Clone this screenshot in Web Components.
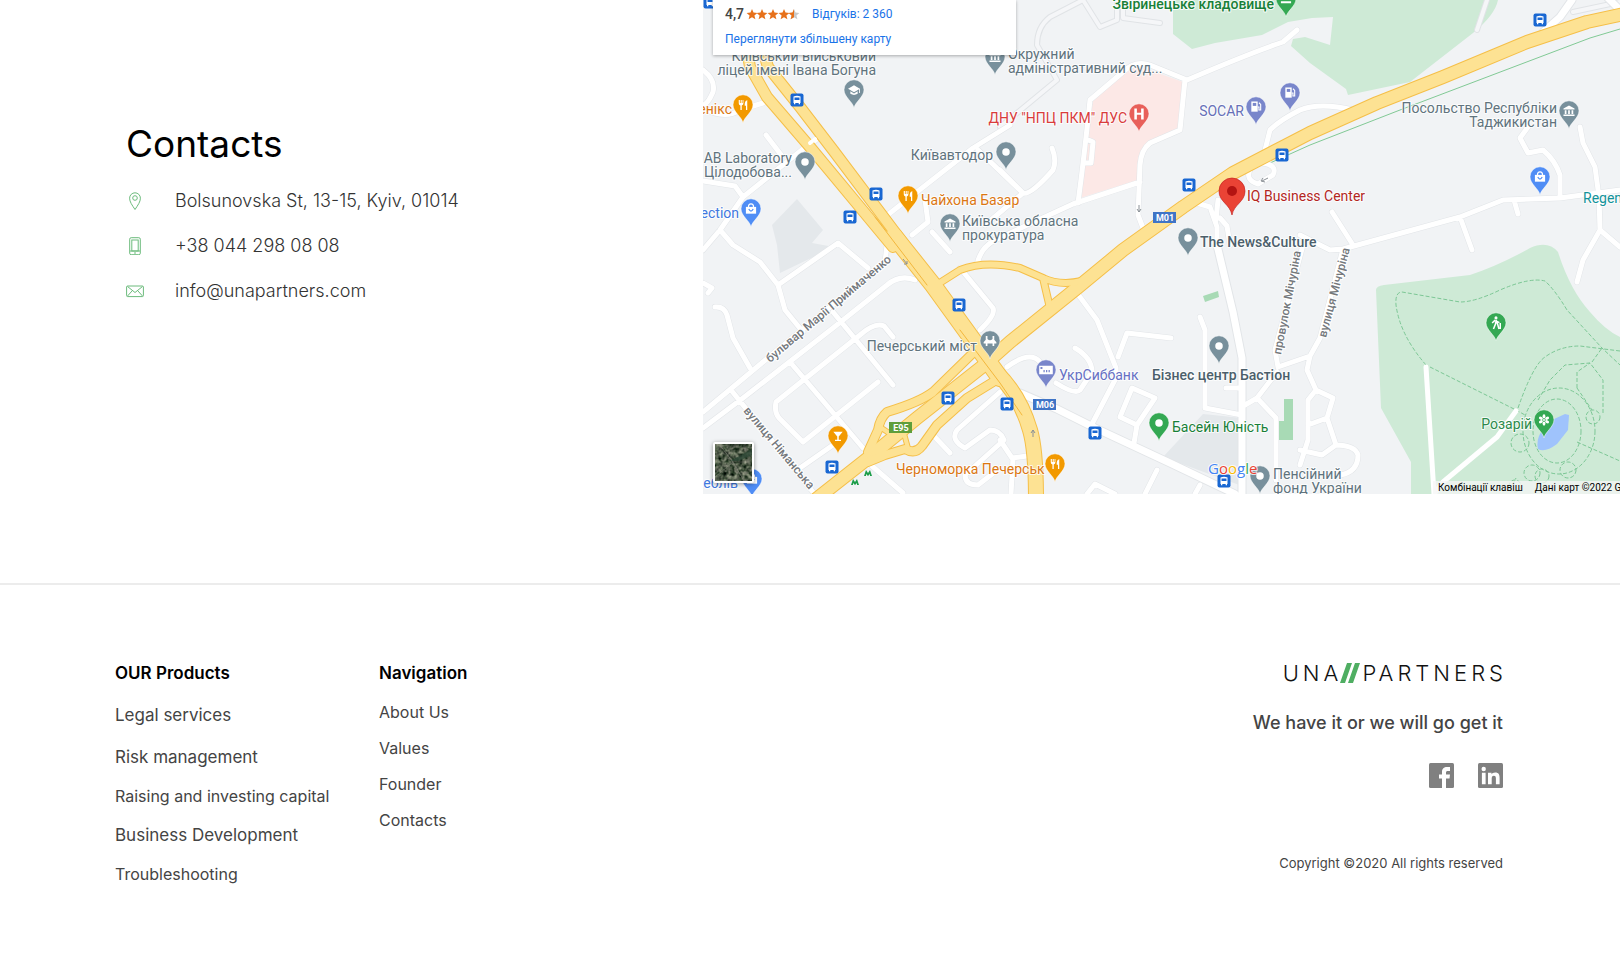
<!DOCTYPE html>
<html lang="en">
<head>
<meta charset="utf-8">
<meta name="viewport" content="width=device-width, initial-scale=1">
<title>Contacts – UNA//PARTNERS</title>
<style>
  body { margin: 0; background: #fff; color: #444; font-family: Inter, "Open Sans", sans-serif; }
</style>
</head>
<body>
<contacts-section>
  <contact-item icon="pin">Bolsunovska St, 13-15, Kyiv, 01014</contact-item>
  <contact-item icon="phone" href="tel:+380442980808">+38 044 298 08 08</contact-item>
  <contact-item icon="mail" href="mailto:info@unapartners.com">info@unapartners.com</contact-item>
  <city-map slot="map"></city-map>
</contacts-section>
<site-footer>
  <footer-column heading="OUR Products" slot="columns">
    <footer-link size="large">Legal services</footer-link>
    <footer-link size="large">Risk management</footer-link>
    <footer-link>Raising and investing capital</footer-link>
    <footer-link size="large">Business Development</footer-link>
    <footer-link>Troubleshooting</footer-link>
  </footer-column>
  <footer-column heading="Navigation" slot="columns">
    <footer-link>About Us</footer-link>
    <footer-link>Values</footer-link>
    <footer-link>Founder</footer-link>
    <footer-link>Contacts</footer-link>
  </footer-column>
  <brand-block slot="brand"></brand-block>
</site-footer>

<script>
class Base extends HTMLElement {
  constructor() {
    super();
    this.attachShadow({ mode: 'open' });
  }
  connectedCallback() { this.shadowRoot.innerHTML = this.render(); }
}

customElements.define('contacts-section', class extends Base {
  render() {
    return `<style>
      :host { display: block; }
      section { display: grid; grid-template-columns: 703fr 917fr; }
      .info { padding: 120px 24px 0 126px; }
      h2 { margin: 0; font-size: 37px; line-height: 48px; font-weight: 400; color: #000; }
      .list { display: grid; row-gap: 21px; margin-top: 21px; }
    </style>
    <section>
      <div class="info"><h2>Contacts</h2><div class="list"><slot></slot></div></div>
      <slot name="map"></slot>
    </section>`;
  }
});

const contactIcons = {
  pin: '<path d="M9 17.500C6 13 3.600 9.800 3.600 6.200a5.400 5.400 0 0 1 10.800 0C14.400 9.800 12 13 9 17.500Z"/><circle cx="9" cy="6" r="2.300"/>',
  phone: '<rect x="3.700" y=".7" width="10.600" height="17" rx="1.500"/><rect x="5.800" y="3" width="6.400" height="11"/><path d="M4 14h10M9 15v2"/>',
  mail: '<rect x=".6" y="4" width="16.800" height="10.600" rx="1"/><path d="M1.500 4.500 9 10.500l7.500-6M1.500 14l4.500-5M16.500 14 12 9"/>'
};
customElements.define('contact-item', class extends Base {
  render() {
    const href = this.getAttribute('href');
    return `<style>
      :host { display: flex; align-items: center; column-gap: 31px; height: 24px; }
      svg { width: 18px; height: 18px; fill: none; stroke: #6cbb7c; stroke-width: 1; flex: none; }
      span, a { font-size: 18px; line-height: 24px; font-weight: 300; color: #333; text-decoration: none; }
    </style>
    <svg viewBox="0 0 18 18" aria-hidden="true">${contactIcons[this.getAttribute('icon')]}</svg>
    ${href ? `<a href="${href}"><slot></slot></a>` : '<span><slot></slot></span>'}`;
  }
});

/* ---------- map data ---------- */
const minorRoads = [
  'M703 70Q716 80 713 92 708 104 703 105', 'M763 103 740 110Q725 120 703 108', 'M766 135 782 156',
  'M817 139 803 149 743 197 720 230 703 250', 'M703 181 735 186 743 197',
  'M720 230 733 245 760 262 778 285 785 310 803 332', 'M778 285 838 243 868 268',
  'M703 412 763 362 885 262 887 245', 'M703 428 743 398 833 328 887 285Q900 274 915 280',
  'M750 368 733 338 727 315Q724 306 715 307', 'M731 390 813 492', 'M833 312 893 385', 'M790 362 863 448',
  'M703 283 712 288 708 293',
  'M893 337 884 326Q875 322 860 335L806 378 776 402Q774 412 779 418L803 442', 'M878 382 803 442', 'M800 468 833 445',
  'M960 268 993 308Q996 315 980 330', 'M977 265Q980 248 995 240L1073 204 1140 182',
  'M872 466 903 493', 'M933 435 950 453',
  'M1000 392 957 430Q950 440 965 448L990 430Q1000 430 1004 440L965 475Q965 485 978 485L1000 468',
  'M1000 440 1012 458 1027 456M1013 458 1011 494',
  'M1007 367Q1030 350 1040 362M1056 383Q1075 395 1080 390L1092 372Q1092 358 1075 348',
  'M1077 293 1097 320 1116 368 1116 378 1092 424', 'M1118 357 1127 333 1171 338',
  'M1132 388 1155 398 1137 425 1120 417ZM1137 425 1134 443', 'M1157 470 1145 494M1087 494 1095 484 1115 494M1195 494 1200 485',
  'M1190 201 1210 207 1217 227 1217 248M1218 200 1216 220M1220 218 1227 226 1230 245',
  'M1200 317 1205 330V408L1242 415', 'M1226 388H1240', 'M1245 405 1257 398 1277 372M1257 398 1276 418V480',
  'M1303 245 1275 350 1278 367 1310 356', 'M1310 356 1320 338 1343 249',
  'M1300 235 1330 250 1343 249 1460 217 1503 200 1560 198 1620 190', 'M1332 212 1353 245', 'M1460 217 1472 250',
  'M1514 200 1518 214', 'M1560 197V175Q1555 160 1543 150L1528 153 1520 138 1528 127',
  'M1580 127 1583 143 1595 167 1599 197 1600 230 1583 260 1577 282M1600 230 1620 247',
  'M1310 356 1307 370 1316 390 1333 398 1327 418 1308 425M1327 418 1336 445 1322 455 1300 450',
  'M1335 445Q1355 445 1358 455 1358 472 1340 475', 'M1316 390 1308 400V440L1300 465',
  'M1297 30 1283 42Q1250 53 1187 80L1150 65Q1135 60 1123 72L1090 100Q1085 150 1078 203',
  'M1185 80 1180 130 1150 143Q1141 150 1140 165L1138 215 1143 228', 'M1086 139 1093 142 1091 163 1083 163',
  'M1265 150 1270 130Q1280 120 1300 110 1320 102 1353 110', 'M1250 170Q1245 180 1258 184L1273 175Q1278 165 1262 163',
  'M1000 170 1023 193Q1030 196 1053 170 1057 160 1052 148', 'M1010 125 973 148 885 217M978 150 1023 193 985 225',
  'M925 200 928 222 912 235M932 232 950 252'
];
const faintRoads = [
  'M1083 0 1050 17Q1037 27 1037 45L1057 80 1000 127', 'M1083 0 1100 27 1117 20V0M1123 0V18L1160 23', 'M1487 0 1477 30',
  'M1573 12 1620 2'
];
const wideRoads = [
  'M1020 393 1057 409 1095 428 1170 463 1235 494', 'M1217 245 1233 312 1242 358V494',
  'M1543 32 1560 17 1572 0', 'M1606 -4 1624 14'
];
const highways = [
  [14, 'M1624 14 1587 22 1527 42 1443 77 1377 103 1310 133 1283 147 1233 173 1183 207 1123 250 1077 288 1010 342 983 366 917 418 867 459 815 500'],
  [12, 'M747 50 750 67 767 97 810 147 893 247'], [12, 'M763 50 768 67 800 107 833 150 906 247'],
  [18, 'M894 236 933 285 967 332 1000 378'], [16, 'M996 372Q1020 395 1030 430 1036 450 1036 500'],
  [10, 'M974 352 933 392Q920 402 887 412 880 418 878 430L868 452'],
  [10, 'M993 382 967 398 937 425 922 446Q915 455 905 449L885 455 868 462'], [6, 'M903 430 908 448'], [6, 'M880 427 895 437'],
  [8, 'M938 284 960 270Q985 260 1020 268L1043 278Q1060 286 1082 281M1043 278 1050 308']
];
const trails = [
  'M1426 365Q1400 335 1396 305 1395 292 1402 292L1460 302Q1475 302 1500 290 1530 277 1545 281 1555 290 1567 310L1602 348 1620 365',
  'M1430 367 1516 410 1525 415', 'M1518 408Q1533 365 1545 357 1560 346 1580 346L1620 351',
  'M1538 400 1550 380 1565 365 1590 363 1603 380V415', 'M1592 362 1602 348M1577 388V372L1590 363M1577 388 1592 410',
  'M1577 442 1620 461', 'M1510 490 1516 478'
];
const GREY = '#78909c', ORANGE = '#f29900', VIOLET = '#7986cb', GREEN = '#34a853', BLUE = '#4f8df5';
const glyphs = {
  dot: '<circle r="4.400" fill="#fff"/>',
  fork: '<path d="M-5-6v4q0 2 2 2.500V6h1.500V.5Q.5 0 .5-2v-4H-.5v3.500h-1V-6h-1.200v3.500h-1V-6Zm8.500 0V6H5V-6Q2-5 2-1.500V1h1.500" fill="#fff"/>',
  bank: '<path d="M0-6.500 6.500-3v1.200h-13V-3ZM-5-1h2v4.500h-2Zm4 0H1v4.500h-2Zm4 0h2v4.500H3ZM-6.500 4.200h13V6h-13Z" fill="#fff"/>',
  cap: '<path d="M-7-1.500 0-5.500l7 4V3.500H6v-4.500L0 2.500Z" fill="#fff"/><path d="M-4.300 1.500V4.500Q0 7 4.300 4.500V1.500L0 4Z" fill="#fff"/>',
  bag: '<path d="M-6-2.500H6V5.500H-6Z" fill="#fff"/><path d="M-3-2.500q0-3.500 3-3.500t3 3.500" fill="none" stroke="#fff" stroke-width="1.400"/><path d="M-2.600 0Q0 4.800 2.600 0" fill="none" stroke="#4f8df5" stroke-width="1.400"/>',
  hosp: '<path d="M-5.500-6.500h3v5h5v-5h3v13h-3v-5.500h-5v5.500h-3Z" fill="#fff"/>',
  pump: '<path d="M-5.500-6.500H2V5.500H-5.500Z" fill="#fff"/><path d="M-3.800-4.800H.3v3.500h-4.100Z" fill="#7986cb"/><path d="M2 0h1.500v3.500h2V-3L3.500-5" fill="none" stroke="#fff" stroke-width="1.300"/>',
  bridge: '<path d="M-5-6h2v3.500Q0 1 3-2.500V-6h2v4.500L7.500 1.500V3H5v3H3V3h-6v3h-2V3h-2.500V1.500L-5-1.500Z" fill="#fff"/>',
  drink: '<path d="M-5.500-5H5.500L.9.5V4.500H3.500V6h-7V4.500H-.9V.5Z" fill="#fff"/>',
  card: '<path d="M-8-5H8V5H-8Z" fill="#fff"/><path d="M-6.500-3.500h2.300v2.300h-2.300ZM-3 0H-1.500v2.500H-3ZM0 0h1.500v2.500H0ZM3 0h1.500v2.500H3Z" fill="#7986cb"/>',
  hiker: '<circle cx="0" cy="-6" r="1.800" fill="#fff"/><path d="m0-3.500 1.800 4.500L3.500 7M-.5-2V1l-2.500 6M0-2.500 4-.5M-1-3.500-4.500 0M5 0v7" fill="none" stroke="#fff" stroke-width="1.800"/>',
  flower: '<g fill="#fff"><circle r="1.200"/>' + [0, 60, 120, 180, 240, 300].map(a => `<ellipse cy="-4.200" rx="1.700" ry="2.500" transform="rotate(${a})"/>`).join('') + '</g>',
  tomb: '<path d="M-2.500-6h5v7h-5ZM-6 2.500H6V5H-6Z" fill="#fff"/>'
};
const pins = [
  [854, 90, GREY, 'cap'], [743, 105, ORANGE, 'fork'], [805, 162, GREY, 'dot'], [751, 209, BLUE, 'bag'], [1006, 152, GREY, 'dot'],
  [908, 196, ORANGE, 'fork'], [950, 224, GREY, 'bank'], [995, 57, GREY, 'bank'], [1139, 114, '#e8605a', 'hosp'],
  [1256, 107, VIOLET, 'pump'], [1290, 93, VIOLET, 'pump'], [1286, -1, GREEN, 'tomb'], [1188, 238, GREY, 'dot'],
  [1569, 111, GREY, 'bank'], [1540, 177, BLUE, 'bag'], [990, 341, GREY, 'bridge'], [838, 436, ORANGE, 'drink'],
  [752, 479, BLUE, 'bag'], [1046, 370, VIOLET, 'card'], [1219, 346, GREY, 'dot'], [1159, 423, GREEN, 'dot'],
  [1055, 464, ORANGE, 'fork'], [1260, 476, GREY, 'dot'], [1496, 323, GREEN, 'hiker'], [1544, 420, GREEN, 'flower']
];
const stops = [[710, 2], [797, 100], [876, 194], [850, 217], [1189, 185], [1282, 155], [1540, 20], [959, 305], [948, 398], [1007, 404], [832, 467], [1095, 433], [1224, 481]];
const T = '#60737d', O = '#db7713', R = '#d93c3c';
/* x, baseline, text, colour, anchor, weight */
const labels = [
  [876, 61, 'Київський військовий', T, 'end'], [876, 75, 'ліцей імені Івана Богуна', T, 'end'],
  [732, 114, 'енікс', O, 'end'], [792, 163, 'AB Laboratory', T, 'end'], [792, 177, 'Цілодобова...', T, 'end'],
  [739, 218, 'ection', '#3f78e0', 'end'], [993, 160, 'Київавтодор', T, 'end'], [921, 205, 'Чайхона Базар', O],
  [962, 226, 'Київська обласна', T], [962, 240, 'прокуратура', T], [1008, 59, 'Окружний', T],
  [1008, 73, 'адміністративний суд...', T], [1127, 123, 'ДНУ "НПЦ ПКМ" ДУС', R, 'end'], [1244, 116, 'SOCAR', '#6670b8', 'end'],
  [1274, 9, 'Звіринецьке кладовище', '#188038', 'end', 500], [1247, 201, 'IQ Business Center', '#b3261e'],
  [1200, 247, 'The News&amp;Culture', '#4c5f6b', 'start', 500], [1557, 113, 'Посольство Республіки', T, 'end'], [1557, 127, 'Таджикистан', T, 'end'],
  [1583, 203, 'Regen', '#12939a'], [977, 351, 'Печерський міст', T, 'end'], [1059, 380, 'УкрСиббанк', '#6670c4'],
  [1152, 380, 'Бізнес центр Бастіон', '#4c5f6b', 'start', 500], [1172, 432, 'Басейн Юність', '#188038'], [896, 474, 'Черноморка Печерськ', O],
  [1273, 479, 'Пенсійний', T], [1273, 493, 'фонд України', T], [1532, 429, 'Розарій', '#2c8a4b', 'end'], [738, 488, 'еблів', '#3f78e0', 'end']
];
const streets = [[770, 363, -40, 'бульвар Марії Приймаченко'], [743, 411, 50, 'вулиця Німанська'], [1281, 355, -79, 'провулок Мічуріна'], [1326, 338, -75, 'вулиця Мічуріна']];
const shields = [[1153, 212, 'M01', '#3f74c6'], [1033, 399, 'M06', '#3f74c6'], [889, 422, 'E95', '#5f9e3a']];

customElements.define('city-map', class extends Base {
  render() {
    const strokes = (list, w, c) => `<path d="${list.join('')}" stroke="${c}" stroke-width="${w}"/>`;
    const star = x => `M${x} 1l1.500 3.600 3.900.3-3 2.500 1 3.800L${x} 9.200l-3.400 2 1-3.800-3-2.500 3.900-.3Z`;
    return `<style>
      :host { display: block; position: relative; overflow: hidden; font-family: Roboto, sans-serif; }
      .map { display: block; width: 100%; height: auto; background: #f1f3f5; }
      .roads { fill: none; stroke-linecap: round; stroke-linejoin: round; }
      .labels { font-size: 14px; paint-order: stroke; stroke: #fff; stroke-width: 2px; stroke-linejoin: round; stroke-opacity: .8; }
      .streets { font-size: 12px; font-weight: 500; fill: #74787c; paint-order: stroke; stroke: #fff; stroke-width: 2px; }
      .shields { font-size: 9px; font-weight: 700; fill: #fff; text-anchor: middle; }
      .card { position: absolute; top: 0; left: 10px; width: 303px; height: 55px; box-sizing: border-box; padding: 5px 12px;
        background: #fff; box-shadow: 0 1px 3px rgba(0,0,0,.3); }
      .rating { display: flex; align-items: center; height: 18px; font-size: 14px; font-weight: 500; color: #444; }
      .rating svg { width: 56px; height: 12px; margin-right: 12px; }
      a { color: #1a73e8; font-size: 12px; line-height: 20px; text-decoration: none; font-weight: 400; }
      .card > a { display: block; margin-top: 6px; }
      .sat { position: absolute; left: 10px; bottom: 11px; width: 41px; height: 41px; box-sizing: border-box; border: 2px solid #fff;
        border-radius: 2px; padding: 0; overflow: hidden; box-shadow: 0 1px 4px rgba(0,0,0,.4); background: #3f4b42; }
      .sat svg { display: block; width: 37px; height: 37px; }
      .legal { position: absolute; bottom: 0; left: calc(100% - 187px); display: flex; column-gap: 12px; padding-left: 5px; height: 13px;
        background: rgba(245,245,245,.75); white-space: nowrap; width: 240px; }
      .legal button, .legal span { border: 0; padding: 0; background: none; font: 400 10px/13px Roboto, sans-serif; color: #000; }
    </style>
    <svg class="map" viewBox="703 0 917 494" role="img" aria-label="Map">
      <path fill="#e4e8eb" d="M797 199 823 230 812 243 834 247 780 273 777 245 772 225ZM1203 414 1242 418V486L1163 457Z"/>
      <path fill="#ceead6" d="M1173 0V34L1192 49 1215 43 1262 35 1288 22 1312 18 1333 17 1330 45 1305 37 1293 39 1291 46 1310 63 1346 89 1348 95 1410 82 1473 33Q1495 15 1498 0ZM1411 494V462L1381 408 1376 290Q1376 286 1384 285L1470 275Q1500 265 1530 248 1548 240 1558 252 1570 290 1590 312 1605 330 1620 337V494Z"/>
      <path fill="#a8dab5" d="M1203 296 1218 291 1219 297 1205 302ZM1284 399h9v41h-14v-19h5Z"/>
      <path fill="#fce8e6" d="M1093 100 1135 65 1183 82 1178 128 1147 142 1138 180 1080 198Z"/>
      <path fill="#9fc3fc" d="M1565 414 1569 415 1568 430 1557 444Q1545 453 1538 449 1536 440 1541 432L1552 420Z"/>
      <g fill="none" stroke="#7cc795" stroke-width="1" stroke-dasharray="4 2">
        <path d="${trails.join('')}"/><ellipse cx="1557" cy="431" rx="24" ry="32"/><ellipse cx="1559" cy="431" rx="36" ry="43"/>
        <circle cx="1520" cy="443" r="9"/><circle cx="1532" cy="473" r="8"/><circle cx="1568" cy="470" r="8"/><circle cx="1593" cy="417" r="7"/><circle cx="1542" cy="476" r="7"/><circle cx="1515" cy="486" r="6"/>
      </g>
      <path fill="none" stroke="#81c995" stroke-width="1" d="M1270 163 1310 145 1400 110 1590 38 1620 29"/>
      <g class="roads">
        ${strokes(faintRoads, 6, '#e0e3e6')}${strokes(faintRoads, 4, '#f5f6f8')}
        ${strokes(minorRoads, 6, '#e2e5e8')}${strokes(wideRoads, 9, '#e2e5e8')}
        ${strokes(minorRoads, 5, '#fff')}${strokes(wideRoads, 7, '#fff')}
        ${strokes(['M1426 367 1434 494M1516 411 1497 437 1443 482 1434 494'], 5, '#fff')}
        ${highways.map(([w, d]) => strokes([d], w, '#f5bf48')).join('')}
        ${highways.map(([w, d]) => strokes([d], w - 2, '#fde293')).join('')}
        ${strokes(['M875 217 927 285M960 330 1000 383 1022 415'], 1, '#f3b73c')}
        ${strokes(['M810 143 815 139'], 4, '#fff')}
      </g>
      <path fill="none" stroke="#8a9096" stroke-width="1" d="M1139 205v7m-2-3 2 3 2-3M903 259l4 5m-3 0h3v-3M1033 437v-7m-2 3 2-3 2 3M1268 178l-6 3m1-3-2 3 4 1"/>
      <path fill="#1e9e4a" d="m864 476 2-6 2 3 2-3 2 6h-2v-2l-2 2-2-2v2ZM851 485l2-6 2 3 2-3 2 6h-2v-2l-2 2-2-2v2Z"/>
      <g class="streets">${streets.map(([x, y, a, t]) => `<text transform="translate(${x} ${y}) rotate(${a})">${t}</text>`).join('')}</g>
      <g class="shields">${shields.map(([x, y, t, c]) => `<rect x="${x}" y="${y}" width="23" height="11" fill="${c}"/><text x="${x + 12}" y="${y + 9}">${t}</text>`).join('')}</g>
      ${stops.map(([x, y]) => `<g transform="translate(${x} ${y})"><rect x="-6.500" y="-6.500" width="13" height="13" rx="2" fill="#1967d2"/><path d="M-3.500-3.500Q0-5 3.500-3.500V3H3v1.300H1.700V3h-3.400v1.300H-3V3h-.5Z" fill="#fff"/><path d="M-2.500-2.500h5V0h-5Z" fill="#1967d2"/></g>`).join('')}
      ${pins.map(([x, y, c, g]) => `<g transform="translate(${x} ${y})"><path d="M0 18C-1 12-10 7-10-.2a10 10 0 0 1 20 0C10 7 1 12 0 18Z" fill="${c}" stroke="#fff" stroke-width=".5"/><g transform="scale(.85)">${glyphs[g]}</g></g>`).join('')}
      <path d="M1232 215C1230 204 1219 202 1219 191a13 13 0 0 1 26 0C1245 202 1234 204 1232 215Z" fill="#ea4335" stroke="#c5221f" stroke-width=".7"/><circle cx="1232" cy="191" r="5" fill="#b31412"/>
      <g class="labels">${labels.map(([x, y, t, c, a = 'start', w = 400]) => `<text x="${x}" y="${y}" fill="${c}" text-anchor="${a}" font-weight="${w}">${t}</text>`).join('')}
      <text x="1208" y="474" style="font:500 15px 'Open Sans',sans-serif"><tspan fill="#4285f4">G</tspan><tspan fill="#ea4335">o</tspan><tspan fill="#fbbc04">o</tspan><tspan fill="#4285f4">g</tspan><tspan fill="#34a853">l</tspan><tspan fill="#ea4335">e</tspan></text></g>
    </svg>
    <div class="card">
      <div class="rating">4,7<svg viewBox="0 0 56 12" role="img" aria-label="4.7 stars"><path fill="#e7711b" d="${[8, 18, 29, 40].map(star).join('')}"/><path fill="#c9c9c9" d="${star(50)}"/><path fill="#e7711b" d="M50 1v8.200l-3.400 2 1-3.800-3-2.500 3.900-.3Z"/></svg><a href="#reviews">Відгуків: 2 360</a></div>
      <a href="#map">Переглянути збільшену карту</a>
    </div>
    <button class="sat" aria-label="Satellite view"><svg viewBox="0 0 37 37"><filter id="terrain" x="0" y="0" width="1" height="1" color-interpolation-filters="sRGB"><feTurbulence type="fractalNoise" baseFrequency=".25" numOctaves="4" seed="8"/><feColorMatrix values=".8 .3 0 0 -.24  .7 .35 0 0 -.17  .7 .25 0 0 -.19  0 0 0 0 1"/></filter><rect width="37" height="37" filter="url(#terrain)"/><path d="M15 17 37 5v6L24 17Z" fill="#23402f" opacity=".7"/><path d="M4 0 18 18 29 37M18 18 0 33" stroke="#8d8d84" fill="none" opacity=".5"/></svg></button>
    <div class="legal"><button>Комбінації клавіш</button><span>Дані карт ©2022 Google</span></div>`;
  }
});

/* ---------- footer ---------- */
customElements.define('site-footer', class extends Base {
  render() {
    return `<style>
      :host { display: block; margin-top: 89px; border-top: 2px solid #ececec; }
      footer { display: flex; justify-content: space-between; padding: 76px 117px 64px 115px; }
      nav { display: grid; grid-template-columns: 264px auto; align-items: start; }
    </style>
    <footer><nav><slot name="columns"></slot></nav><slot name="brand"></slot></footer>`;
  }
});

customElements.define('footer-column', class extends Base {
  render() {
    return `<style>
      :host { display: block; }
      h3 { margin: 0 0 16px; font-size: 17px; line-height: 24px; font-weight: 600; color: #000; }
      div { display: grid; row-gap: 14px; }
    </style><h3>${this.getAttribute('heading')}</h3><div><slot></slot></div>`;
  }
});

customElements.define('footer-link', class extends Base {
  render() {
    return `<style>
      :host { display: block; }
      a { display: block; color: #444; text-decoration: none; font-size: 16px; line-height: 22px; }
      :host([size="large"]) a { font-size: 17px; line-height: 28px; }
    </style><a href="#"><slot></slot></a>`;
  }
});

customElements.define('brand-block', class extends Base {
  render() {
    return `<style>
      :host { display: flex; flex-direction: column; align-items: flex-end; }
      .logo { display: flex; align-items: center; height: 24px; font-size: 22px; line-height: 24px; font-weight: 300; letter-spacing: 4px; color: #111; text-decoration: none; }
      .logo svg { width: 20px; height: 20px; margin: 0 2px 0 -2px; }
      .logo span:last-child { margin-right: -4px; }
      p { margin: 24px 0 0; font-size: 18px; line-height: 28px; font-weight: 500; color: #444; }
      .social { display: flex; column-gap: 24px; margin-top: 26px; }
      .social a, .social svg { display: block; width: 25px; height: 25px; }
      small { margin-top: 65px; font-size: 13px; line-height: 20px; color: #444; }
    </style>
    <a class="logo" href="#"><span>UNA</span><svg viewBox="0 0 20 20" aria-hidden="true"><path fill="#4fae62" d="M7 0h5L5 20H0ZM15 0h5l-7 20H8Z"/></svg><span>PARTNERS</span></a>
    <p>We have it or we will go get it</p>
    <div class="social">
      <a href="#" aria-label="Facebook"><svg viewBox="0 0 25 25"><rect width="25" height="25" rx="1.500" fill="#808080"/><path fill="#fff" d="M13 25V15.500h-3V11.500h3V9c0-3.500 2-5 5-5h3v4h-2.200C17.500 8 17 8.500 17 9.700v1.800h4l-.5 4H17V25Z"/></svg></a>
      <a href="#" aria-label="LinkedIn"><svg viewBox="0 0 25 25"><rect width="25" height="25" rx="1.500" fill="#808080"/><circle cx="5.700" cy="6" r="2.200" fill="#fff"/><path fill="#fff" d="M3.900 9.700h3.700V21.300H3.900ZM10 9.700h3.500v1.600c.7-1.200 2-1.900 3.700-1.900 3.500 0 4.400 2.200 4.400 5.500v6.400h-3.700v-5.700c0-1.700-.3-2.900-2-2.900s-2.200 1.300-2.200 2.900v5.700H10Z"/></svg></a>
    </div>
    <small>Copyright ©2020 All rights reserved</small>`;
  }
});
</script>
</body>
</html>
